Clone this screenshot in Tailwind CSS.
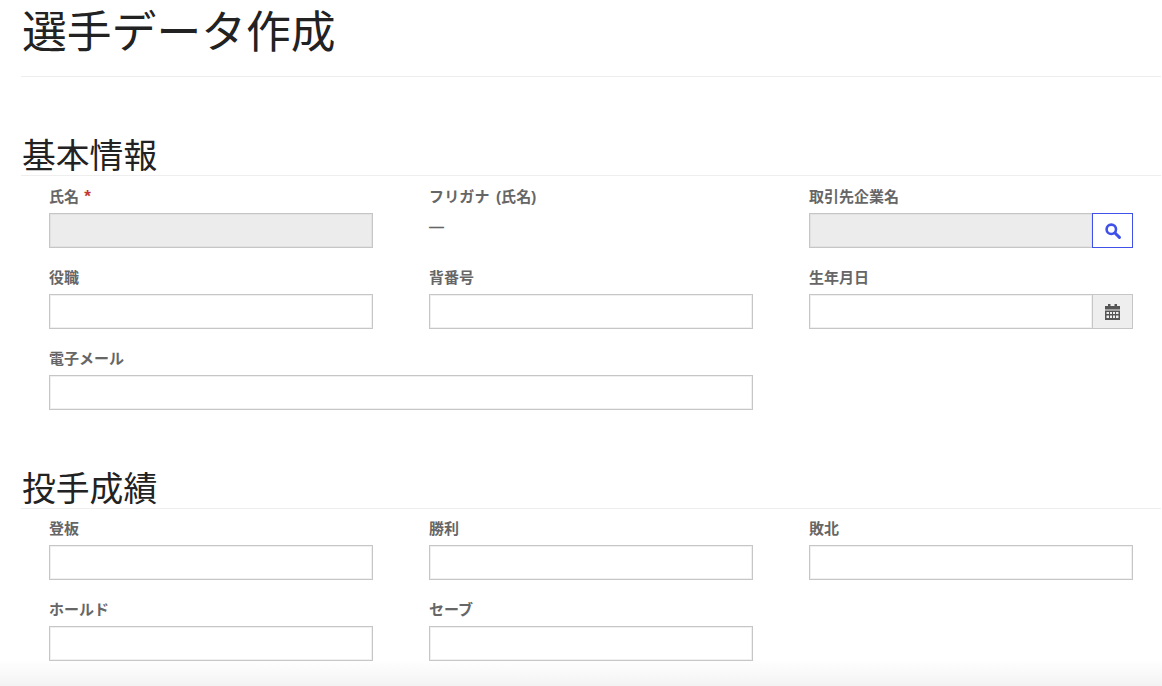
<!DOCTYPE html>
<html>
<head>
  <meta charset="utf-8">
  <title>選手データ作成</title>
  <script src="https://cdn.jsdelivr.net/npm/@tailwindcss/browser@4"></script>
</head>
<body class="bg-white text-[#222] font-['Liberation_Sans','Noto_Sans_CJK_JP',sans-serif] h-[686px] overflow-hidden relative">
  <div class="pl-[21px] pr-px">
    <!-- Page title -->
    <h1 class="h-[77px] border-b border-[#eeeeee] text-[44.8px] leading-[64px] font-normal pl-px">選手データ作成</h1>

    <!-- Basic info -->
    <h2 class="mt-[57px] h-[42px] border-b border-[#eeeeee] text-[33.8px] leading-[45px] pl-px">基本情報</h2>
    <div class="grid grid-cols-[324px_324px_324px] gap-x-[56px] pl-[28px] pt-[12px]">
      <div class="h-[81px]">
        <label class="block h-[25px] text-[15px] leading-[18px] font-bold text-[#666] [word-spacing:1px]">氏名 <span class="text-[#c23934] text-[17px]">*</span></label>
        <div class="h-[35px] border border-[#c6c6c6] bg-[#ececec] shadow-[inset_0_0_0_1px_#e2e2e2]"></div>
      </div>
      <div class="h-[81px]">
        <label class="block h-[25px] text-[15px] leading-[18px] font-bold text-[#666] [word-spacing:2px] tracking-[0.15px]">フリガナ (氏名)</label>
        <div class="text-[15px] leading-[28px] font-bold text-[#666]">—</div>
      </div>
      <div class="h-[81px]">
        <label class="block h-[25px] text-[15px] leading-[18px] font-bold text-[#666]">取引先企業名</label>
        <div class="flex h-[35px]">
          <div class="flex-1 border border-r-0 border-[#c6c6c6] bg-[#ececec] shadow-[inset_0_0_0_1px_#e2e2e2]"></div>
          <div class="w-[41px] border border-[#3f51e8] bg-white flex items-center justify-center">
            <svg width="16" height="16" viewBox="0 0 16 16" fill="none" stroke="#3f51e8"><circle cx="6.300" cy="6.300" r="4.700" stroke-width="2.600"/><path d="M10 10L14.400 14.400" stroke-width="3" stroke-linecap="round"/></svg>
          </div>
        </div>
      </div>

      <div class="h-[81px]">
        <label class="block h-[25px] text-[15px] leading-[18px] font-bold text-[#666]">役職</label>
        <input class="block w-full h-[35px] border border-[#c6c6c6] bg-white shadow-[inset_0_0_0_1px_#f0f0f0]">
      </div>
      <div class="h-[81px]">
        <label class="block h-[25px] text-[15px] leading-[18px] font-bold text-[#666]">背番号</label>
        <input class="block w-full h-[35px] border border-[#c6c6c6] bg-white shadow-[inset_0_0_0_1px_#f0f0f0]">
      </div>
      <div class="h-[81px]">
        <label class="block h-[25px] text-[15px] leading-[18px] font-bold text-[#666]">生年月日</label>
        <div class="flex h-[35px]">
          <input class="flex-1 min-w-0 h-full border border-r-0 border-[#c6c6c6] bg-white shadow-[inset_0_0_0_1px_#f0f0f0]">
          <div class="w-[41px] border border-[#c6c6c6] bg-[#eeeeee] flex items-center justify-center">
            <svg width="15" height="16" viewBox="0 0 15 16"><path fill="#555" fill-rule="evenodd" d="M3 0h2.500v2h4V0H12v2h3v3.500H0V2h3zM0 6.500h15V16H0zM1.500 8v2h2.500V8zm3.500 0v2h2V8zm3 0v2h2V8zm3 0v2h2.500V8zM1.500 11.500v2.500h2.500v-2.500zm3.500 0v2.500h2v-2.500zm3 0v2.500h2v-2.500zm3 0v2.500h2.500v-2.500z"/></svg>
          </div>
        </div>
      </div>

      <div class="col-span-2 h-[81px]">
        <label class="block h-[25px] text-[15px] leading-[18px] font-bold text-[#666]">電子メール</label>
        <input class="block w-full h-[35px] border border-[#c6c6c6] bg-white shadow-[inset_0_0_0_1px_#f0f0f0]">
      </div>
    </div>

    <!-- Pitching stats -->
    <h2 class="mt-[36px] h-[42px] border-b border-[#eeeeee] text-[33.8px] leading-[45px] pl-px">投手成績</h2>
    <div class="grid grid-cols-[324px_324px_324px] gap-x-[56px] pl-[28px] pt-[11px]">
      <div class="h-[81px]">
        <label class="block h-[25px] text-[15px] leading-[18px] font-bold text-[#666]">登板</label>
        <input class="block w-full h-[35px] border border-[#c6c6c6] bg-white shadow-[inset_0_0_0_1px_#f0f0f0]">
      </div>
      <div class="h-[81px]">
        <label class="block h-[25px] text-[15px] leading-[18px] font-bold text-[#666]">勝利</label>
        <input class="block w-full h-[35px] border border-[#c6c6c6] bg-white shadow-[inset_0_0_0_1px_#f0f0f0]">
      </div>
      <div class="h-[81px]">
        <label class="block h-[25px] text-[15px] leading-[18px] font-bold text-[#666]">敗北</label>
        <input class="block w-full h-[35px] border border-[#c6c6c6] bg-white shadow-[inset_0_0_0_1px_#f0f0f0]">
      </div>
      <div class="h-[81px]">
        <label class="block h-[25px] text-[15px] leading-[18px] font-bold text-[#666]">ホールド</label>
        <input class="block w-full h-[35px] border border-[#c6c6c6] bg-white shadow-[inset_0_0_0_1px_#f0f0f0]">
      </div>
      <div class="h-[81px]">
        <label class="block h-[25px] text-[15px] leading-[18px] font-bold text-[#666]">セーブ</label>
        <input class="block w-full h-[35px] border border-[#c6c6c6] bg-white shadow-[inset_0_0_0_1px_#f0f0f0]">
      </div>
    </div>
  </div>

  <!-- Fade at the bottom edge -->
  <div class="absolute left-0 right-0 bottom-0 h-[26px] bg-gradient-to-b from-white/0 to-[#f3f3f3] pointer-events-none"></div>
</body>
</html>
